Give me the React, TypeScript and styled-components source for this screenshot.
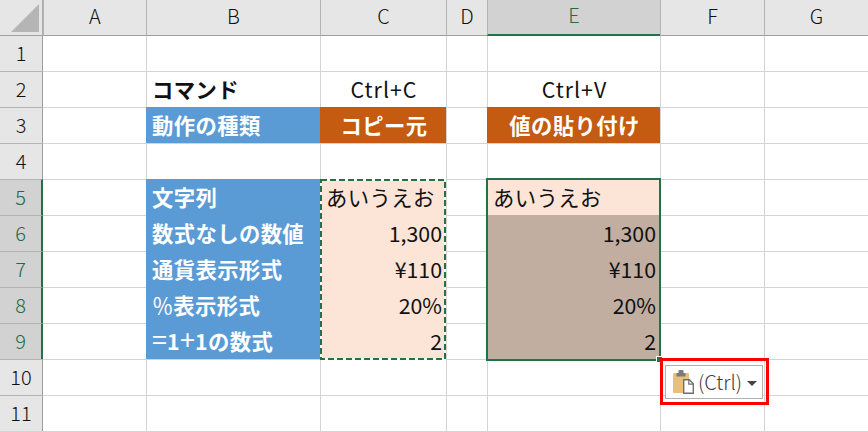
import React from "react";
import styled, { createGlobalStyle } from "styled-components";

const GlobalStyle = createGlobalStyle`
    html, body {
        margin: 0;
        padding: 0;
        background: #ffffff;
    }
`;

const Sheet = styled.div`
    position: relative;
    width: 868px;
    height: 432px;
    box-sizing: border-box;
    overflow: hidden;
    display: grid;
    grid-template-columns: 43px 103px 174px 126px 41px 173px 104px 104px;
    grid-template-rows: 36px 35px repeat(10, 36px);
    border-bottom: 1px solid #d4d4d4;
    font-family: "Noto Sans CJK JP", "Noto Sans", sans-serif;
    font-size: 21.33px;
    color: #111111;
`;

const Corner = styled.div`
    position: relative;
    background: #e6e6e6;
    border-right: 1px solid #ababab;
    border-bottom: 1px solid #9f9f9f;
    box-sizing: border-box;

    svg {
        position: absolute;
        left: 11px;
        top: 4px;
    }
`;

const ColHeader = styled.div<{ $active?: boolean }>`
    display: flex;
    align-items: center;
    justify-content: center;
    box-sizing: border-box;
    padding-bottom: 5px;
    font-size: 20px;
    font-weight: 300;
    background: ${({ $active }) => ($active ? "#d2d2d2" : "#e6e6e6")};
    color: ${({ $active }) => ($active ? "#1f6b45" : "#111111")};
    border-left: 1px solid #b4b4b4;
    border-bottom: ${({ $active }) => ($active ? "2px solid #217346" : "1px solid #9f9f9f")};
`;

const RowHeader = styled.div<{ $active?: boolean; $first?: boolean }>`
    display: flex;
    align-items: center;
    justify-content: center;
    box-sizing: border-box;
    padding-bottom: 3px;
    font-size: 20px;
    font-weight: 300;
    background: ${({ $active }) => ($active ? "#d2d2d2" : "#e6e6e6")};
    color: ${({ $active }) => ($active ? "#1f6b45" : "#111111")};
    border-right: ${({ $active }) => ($active ? "2px solid #217346" : "1px solid #9f9f9f")};
    border-top: ${({ $first }) => ($first ? "0" : "1px solid #b4b4b4")};
`;

const Cell = styled.div<{
    $bg?: string;
    $align?: string;
    $bold?: boolean;
    $color?: string;
    $tracking?: number;
    $first?: boolean;
}>`
    display: flex;
    align-items: center;
    box-sizing: border-box;
    padding: 0 4px 3px 5px;
    white-space: nowrap;
    justify-content: ${({ $align }) => $align || "flex-start"};
    background: ${({ $bg }) => $bg || "#ffffff"};
    color: ${({ $color }) => $color || "#111111"};
    font-weight: ${({ $bold }) => ($bold ? 700 : 400)};
    letter-spacing: ${({ $tracking }) => ($tracking === undefined ? 0.4 : $tracking)}px;
    border-left: 1px solid ${({ $bg }) => $bg || "#d4d4d4"};
    border-top: ${({ $first, $bg }) => ($first ? "0" : `1px solid ${$bg || "#d4d4d4"}`)};

    ${RowHeader} + & {
        border-left: 0;
    }
`;

const ThinGlyph = styled.span`
    font-size: 27px;
    line-height: 0;
    font-weight: 400;
    letter-spacing: 0;
`;

const ThinPercent = styled.span`
    font-weight: 400;
    letter-spacing: 0;
`;

const Ants = styled.svg`
    position: absolute;
    left: 320px;
    top: 179px;
`;

const Selection = styled.div`
    position: absolute;
    left: 486px;
    top: 178px;
    width: 175px;
    height: 183px;
    box-sizing: border-box;
    border: 2px solid #217346;
`;

const FillHandle = styled.div`
    position: absolute;
    left: 656px;
    top: 356px;
    width: 7px;
    height: 7px;
    box-sizing: border-box;
    background: #217346;
    border: 1px solid #ffffff;
`;

const RedFrame = styled.div`
    position: absolute;
    left: 660px;
    top: 358px;
    width: 109px;
    height: 47px;
    box-sizing: border-box;
    border: 3px solid #ff0000;
`;

const PasteButton = styled.div`
    position: absolute;
    left: 665px;
    top: 365px;
    width: 98px;
    height: 34px;
    box-sizing: border-box;
    display: flex;
    align-items: center;
    gap: 3px;
    padding: 0 0 1px 7px;
    background: #ffffff;
    border: 1px solid #b0b0b0;
    font-size: 20px;
    font-weight: 300;
    color: #3a3a3a;
`;

const Caret = styled.span`
    width: 0;
    height: 0;
    margin-left: 2px;
    margin-top: 3px;
    border-left: 5px solid transparent;
    border-right: 5px solid transparent;
    border-top: 5px solid #444444;
`;

const COLS = ["A", "B", "C", "D", "E", "F", "G"];
const BLUE = "#5b9bd5";
const ORANGE = "#c55a11";
const PEACH = "#fce4d6";
const TAUPE = "#c1aea1";

type CellData = {
    text?: React.ReactNode;
    bg?: string;
    align?: string;
    bold?: boolean;
    color?: string;
    tracking?: number;
};

const label = (text: React.ReactNode): CellData => ({ text, bg: BLUE, bold: true, color: "#ffffff" });
const head = (text: string): CellData => ({ text, bg: ORANGE, bold: true, color: "#ffffff", align: "center" });
const num = (text: string, bg: string): CellData => ({ text, bg, align: "flex-end", tracking: 0 });
const shortcut = (text: string): CellData => ({ text, align: "center", tracking: 1 });

const DATA: Record<number, Record<string, CellData>> = {
    2: {
        B: { text: "コマンド", bold: true },
        C: shortcut("Ctrl+C"),
        E: shortcut("Ctrl+V"),
    },
    3: { B: label("動作の種類"), C: head("コピー元"), E: head("値の貼り付け") },
    5: {
        B: label("文字列"),
        C: { text: "あいうえお", bg: PEACH },
        E: { text: "あいうえお", bg: PEACH },
    },
    6: { B: label("数式なしの数値"), C: num("1,300", PEACH), E: num("1,300", TAUPE) },
    7: { B: label("通貨表示形式"), C: num("¥110", PEACH), E: num("¥110", TAUPE) },
    8: {
        B: label(<span><ThinPercent>％</ThinPercent>表示形式</span>),
        C: num("20%", PEACH),
        E: num("20%", TAUPE),
    },
    9: {
        B: label(<span><ThinGlyph>=</ThinGlyph>1<ThinGlyph>+</ThinGlyph>1の数式</span>),
        C: num("2", PEACH),
        E: num("2", TAUPE),
    },
};

const PasteIcon = () => (
    <svg width="22" height="24" viewBox="0 0 22 24">
        <rect x="0" y="3" width="16" height="20" rx="1" fill="#e8bf7e" />
        <rect x="3.5" y="3" width="9" height="3.5" fill="#7a7a7a" />
        <rect x="5.5" y="0" width="5" height="4" rx="1" fill="#7a7a7a" />
        <path d="M10.7 9.7h5.6l4 4v9.6h-9.6z" fill="#ffffff" stroke="#6f6f6f" strokeWidth="1.4" />
        <path d="M15.8 9.7v4.5h4.5" fill="none" stroke="#6f6f6f" strokeWidth="1.2" />
    </svg>
);

const App = () => {
    const rows = Array.from({ length: 11 }, (_, i) => i + 1);
    return (
        <Sheet>
            <GlobalStyle />
            <Corner>
                <svg width="28" height="28" viewBox="0 0 28 28">
                    <path d="M28 0V28H0z" fill="#b5b5b5" />
                </svg>
            </Corner>
            {COLS.map((c) => (
                <ColHeader key={c} $active={c === "E"}>{c}</ColHeader>
            ))}
            {rows.map((r) => (
                <React.Fragment key={r}>
                    <RowHeader $active={r >= 5 && r <= 9} $first={r === 1}>{r}</RowHeader>
                    {COLS.map((c) => {
                        const d = DATA[r]?.[c];
                        return (
                            <Cell
                                key={c}
                                $bg={d?.bg}
                                $align={d?.align}
                                $bold={d?.bold}
                                $color={d?.color}
                                $tracking={d?.tracking}
                                $first={r === 1}
                            >
                                {d?.text}
                            </Cell>
                        );
                    })}
                </React.Fragment>
            ))}
            <Ants width="126" height="181" viewBox="0 0 126 181">
                <rect x="1" y="1" width="124" height="179" fill="none" stroke="#ffffff" strokeWidth="2" />
                <rect x="1" y="1" width="124" height="179" fill="none" stroke="#217346" strokeWidth="2" strokeDasharray="6 3" />
            </Ants>
            <Selection />
            <FillHandle />
            <RedFrame />
            <PasteButton>
                <PasteIcon />
                (Ctrl)
                <Caret />
            </PasteButton>
        </Sheet>
    );
};

export default App;
